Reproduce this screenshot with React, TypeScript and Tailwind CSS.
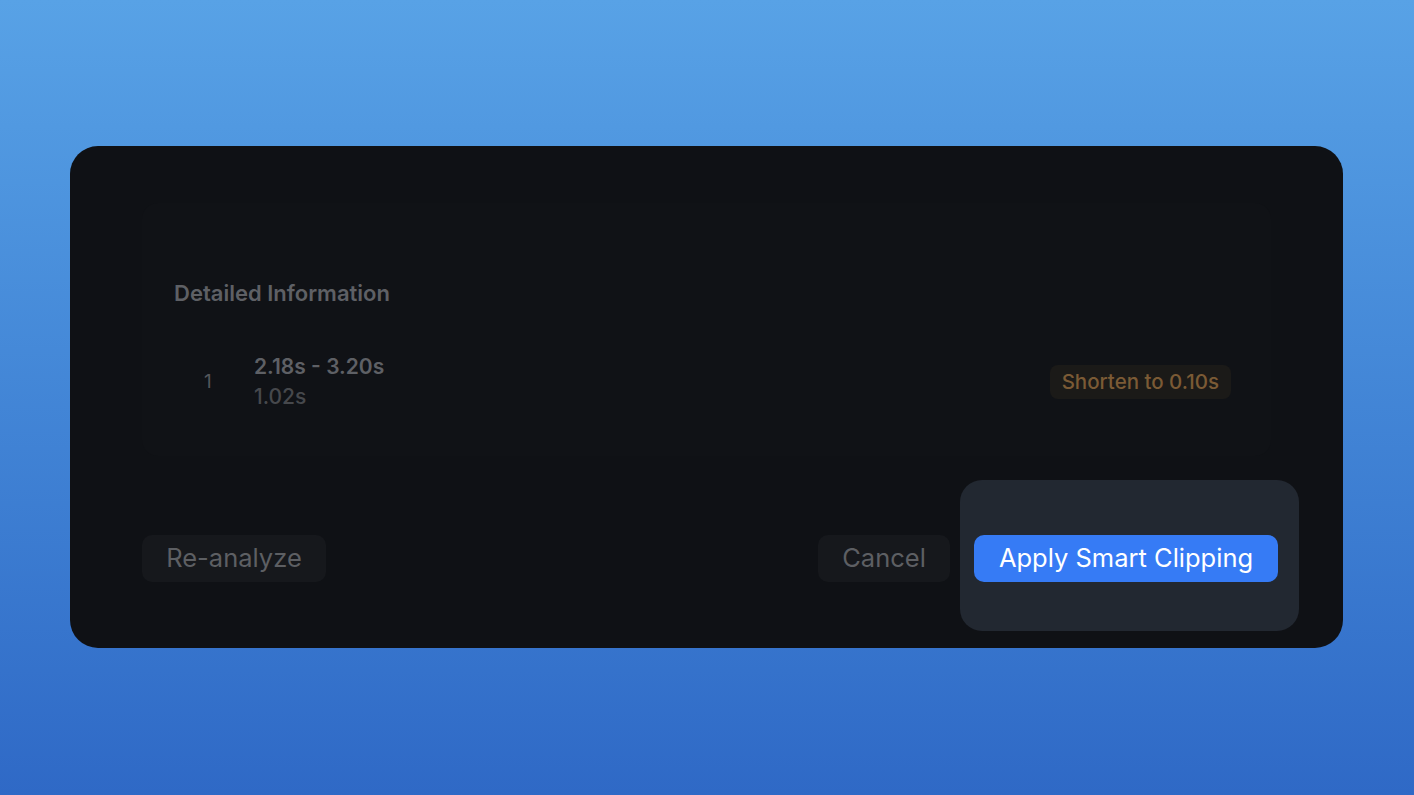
import React from 'react';

const segments = [{ id: 1, start: 2.18, end: 3.2, target: 0.1 }];

export default function App() {
  return (
    <div
      className="w-full h-[795px] flex items-start bg-gradient-to-b from-[#58a2e6] to-[#2f69c6] pt-[146px] pl-[70px]"
      style={{ fontFamily: 'Inter, "Noto Sans", sans-serif' }}
    >
      <div className="w-[1273px] h-[502px] rounded-[28px] bg-[#0f1115] px-[72px] pt-[57px] flex flex-col">
        {/* Details panel */}
        <div className="h-[253px] rounded-[16px] bg-[#101216] pl-[32px] pr-[40px] pt-[76px]">
          <h3 className="text-[22px] leading-[28px] font-semibold text-[#5e6065]">Detailed Information</h3>
          <div className="mt-[45px]">
            {segments.map((s) => (
              <div key={s.id} className="flex items-center h-[60px]">
                <div className="w-[80px] pl-[30px] text-[19px] text-[#54565b]">{s.id}</div>
                <div className="flex flex-col">
                  <span className="text-[21px] leading-[30px] font-semibold text-[#5e6065]">
                    {s.start.toFixed(2)}s - {s.end.toFixed(2)}s
                  </span>
                  <span className="text-[21px] leading-[30px] font-medium text-[#46484c]">
                    {(s.end - s.start).toFixed(2)}s
                  </span>
                </div>
                <div className="ml-auto h-[34px] px-[12px] rounded-[8px] bg-[#1b1a18] flex items-center text-[20.5px] text-[#7b5a35] font-medium">
                  Shorten to {s.target.toFixed(2)}s
                </div>
              </div>
            ))}
          </div>
        </div>

        {/* Footer */}
        <div className="mt-[79px] mr-[-7px] flex items-center">
          <button className="h-[47px] w-[184px] rounded-[10px] bg-[#16181c] text-[25.5px] text-[#5d5f63]">
            Re-analyze
          </button>
          <div className="ml-auto flex items-center gap-[24px]">
            <button className="h-[47px] w-[132px] rounded-[10px] bg-[#16181c] text-[25.5px] text-[#5d5f63]">
              Cancel
            </button>
            <div className="relative">
              <div className="absolute left-[-14px] right-[-21px] top-[-55px] bottom-[-49px] rounded-[22px] bg-[#222831]" />
              <button className="relative h-[47px] w-[304px] rounded-[10px] bg-[#367bf5] text-[25.5px] text-white">
                Apply Smart Clipping
              </button>
            </div>
          </div>
        </div>
      </div>
    </div>
  );
}
